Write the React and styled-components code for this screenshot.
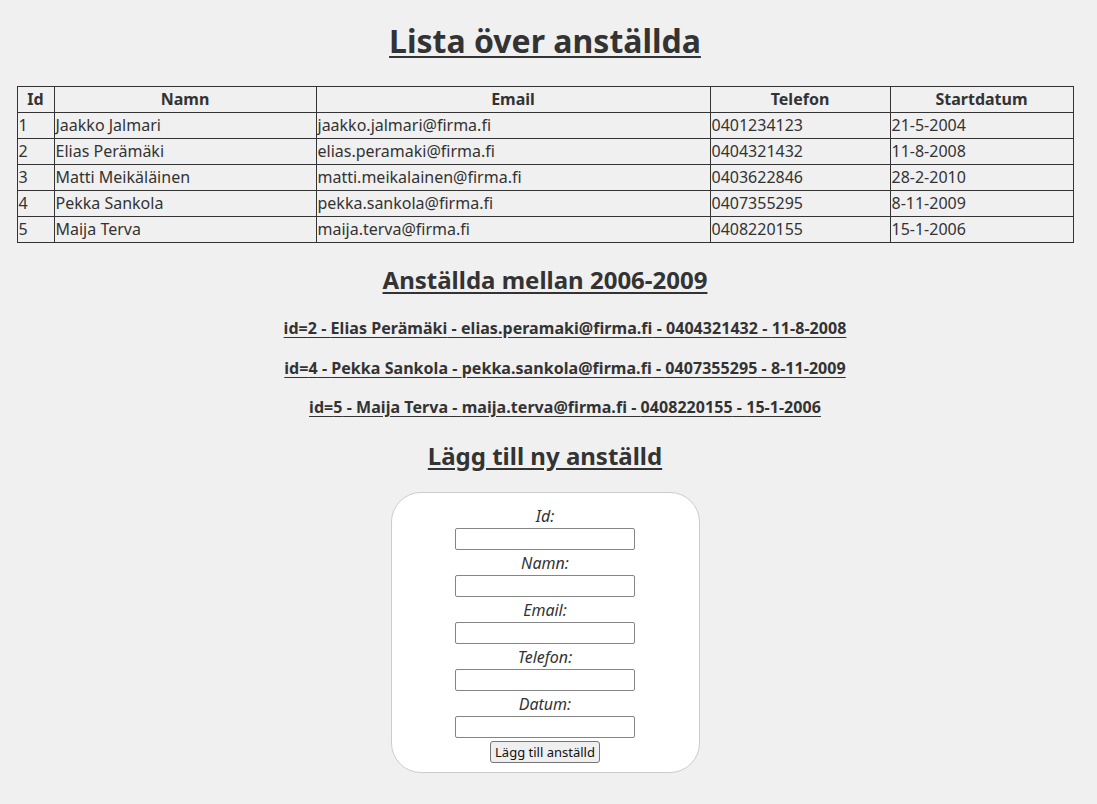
import React from "react";
import styled, { createGlobalStyle } from "styled-components";

const employees = [
	{ id: 1, name: "Jaakko Jalmari", email: "jaakko.jalmari@firma.fi", phone: "0401234123", start: "21-5-2004" },
	{ id: 2, name: "Elias Perämäki", email: "elias.peramaki@firma.fi", phone: "0404321432", start: "11-8-2008" },
	{ id: 3, name: "Matti Meikäläinen", email: "matti.meikalainen@firma.fi", phone: "0403622846", start: "28-2-2010" },
	{ id: 4, name: "Pekka Sankola", email: "pekka.sankola@firma.fi", phone: "0407355295", start: "8-11-2009" },
	{ id: 5, name: "Maija Terva", email: "maija.terva@firma.fi", phone: "0408220155", start: "15-1-2006" },
];

const yearOf = (d) => Number(d.split("-")[2]);

const fields = ["Id", "Namn", "Email", "Telefon", "Datum"];

const App = () => {
	const between = employees.filter((e) => yearOf(e.start) >= 2006 && yearOf(e.start) <= 2009);

	return (
		<Page>
			<GlobalStyle />
			<Title>Lista över anställda</Title>
			<Table>
				<colgroup>
					<col style={{ width: 37 }} />
					<col style={{ width: 262 }} />
					<col style={{ width: 394 }} />
					<col style={{ width: 180 }} />
					<col style={{ width: 183 }} />
				</colgroup>
				<thead>
					<tr>
						<th>Id</th>
						<th>Namn</th>
						<th>Email</th>
						<th>Telefon</th>
						<th>Startdatum</th>
					</tr>
				</thead>
				<tbody>
					{employees.map((e) => (
						<tr key={e.id}>
							<td>{e.id}</td>
							<td>{e.name}</td>
							<td>{e.email}</td>
							<td>{e.phone}</td>
							<td>{e.start}</td>
						</tr>
					))}
				</tbody>
			</Table>

			<SubTitle>Anställda mellan 2006-2009</SubTitle>
			<EntryList>
				{between.map((e) => (
					<Entry key={e.id}>
						id={e.id} - {e.name} - {e.email} - {e.phone} - {e.start}
					</Entry>
				))}
			</EntryList>

			<SubTitle $form>Lägg till ny anställd</SubTitle>
			<Form onSubmit={(ev) => ev.preventDefault()}>
				{fields.map((f) => (
					<React.Fragment key={f}>
						<Label htmlFor={f}>{f}:</Label>
						<Input id={f} type="text" />
					</React.Fragment>
				))}
				<Button type="submit">Lägg till anställd</Button>
			</Form>
		</Page>
	);
};

const GlobalStyle = createGlobalStyle`
	body {
		margin: 0;
		background: #f0f0f0;
		color: #333;
		font-family: "Noto Sans", "Open Sans", sans-serif;
		font-size: 16px;
	}
`;

const Page = styled.div`
	display: flex;
	flex-direction: column;
	align-items: center;
	padding: 0 24px 30px 17px;
`;

const Title = styled.h1`
	font-size: 32px;
	font-weight: 700;
	line-height: 44px;
	margin: 19px 0 23px;
	text-decoration: underline;
	text-decoration-thickness: 2px;
	text-underline-offset: 3px;
`;

const Table = styled.table`
	width: 100%;
	border-collapse: collapse;
	table-layout: fixed;

	th,
	td {
		border: 1px solid #333;
		padding: 1px 1px;
		line-height: 23px;
		text-align: left;
		white-space: nowrap;
	}

	th {
		text-align: center;
		font-weight: 700;
	}
`;

const SubTitle = styled.h2`
	font-size: 24px;
	font-weight: 700;
	line-height: 33px;
	margin: ${(p) => (p.$form ? "3px 0 20px" : "20px 0 21px")};
	text-decoration: underline;
	text-underline-offset: 3px;
`;

const EntryList = styled.ul`
	align-self: stretch;
	list-style: none;
	margin: 0;
	padding: 0 0 0 40px;
	text-align: center;
`;

const Entry = styled.li`
	font-weight: 700;
	line-height: 22px;
	margin: 0 0 17.5px;
	letter-spacing: 0.003em;
	text-decoration: underline;
	text-underline-offset: 3px;
`;

const Form = styled.form`
	display: flex;
	flex-direction: column;
	align-items: center;
	width: 309px;
	box-sizing: border-box;
	padding: 11px 0 9px;
	background: #fff;
	border: 1px solid #ccc;
	border-radius: 30px;
`;

const Label = styled.label`
	font-style: italic;
	line-height: 24px;
`;

const Input = styled.input`
	box-sizing: border-box;
	width: 180px;
	height: 22px;
	margin: 0 0 1px;
	border: 1px solid #858585;
	border-radius: 2px;
	background: #fff;
`;

const Button = styled.button`
	margin-top: 2px;
	height: 22px;
	padding: 0 4px;
	font-family: "Noto Sans", sans-serif;
	font-size: 13px;
	color: #111;
	background: #efefef;
	border: 1px solid #767676;
	border-radius: 3px;
`;

export default App;
